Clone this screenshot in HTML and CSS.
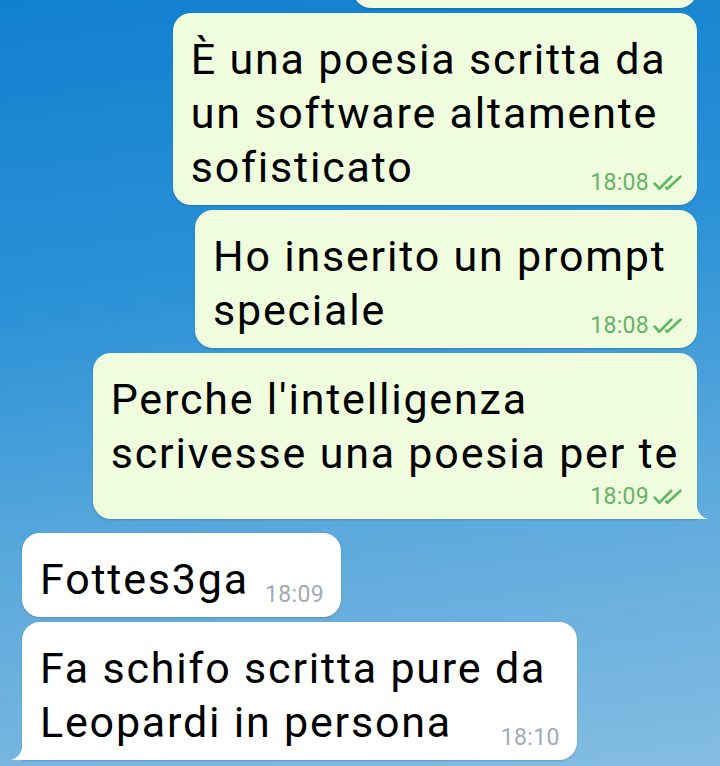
FILE: index.html
```html
<!DOCTYPE html>
<html lang="it">
<head>
    <meta charset="UTF-8">
    <meta name="viewport" content="width=device-width, initial-scale=1.0">
    <title>Chat</title>
    <link rel="stylesheet" href="styles.css">
</head>
<body>
    <div class="chat">
        <div class="bubble out cut"></div>

        <div class="bubble out">
            <span class="text">È una poesia scritta da <br>un software altamente <br>sofisticato</span><span class="spacer"></span>
            <span class="meta">18:08
                <svg class="checks" viewBox="0 0 28 14"><path d="M1.5 7.5 L5.5 12 L16 1.5"/><path d="M11.5 11 L12.5 12 L24 1.5"/></svg>
            </span>
        </div>

        <div class="bubble out">
            <span class="text">Ho inserito un prompt <br>speciale</span><span class="spacer"></span>
            <span class="meta">18:08
                <svg class="checks" viewBox="0 0 28 14"><path d="M1.5 7.5 L5.5 12 L16 1.5"/><path d="M11.5 11 L12.5 12 L24 1.5"/></svg>
            </span>
        </div>

        <div class="bubble out tail">
            <span class="text">Perche l'intelligenza <br>scrivesse una poesia per te</span><br><span class="spacer"></span>
            <span class="meta">18:09
                <svg class="checks" viewBox="0 0 28 14"><path d="M1.5 7.5 L5.5 12 L16 1.5"/><path d="M11.5 11 L12.5 12 L24 1.5"/></svg>
            </span>
            <svg class="tail-shape" viewBox="0 0 12 20"><path d="M0 0 C0 11 4 18 12 20 L0 20 Z"/></svg>
        </div>

        <div class="bubble in first">
            <span class="text">Fottes3ga</span><span class="spacer"></span>
            <span class="meta">18:09</span>
        </div>

        <div class="bubble in tail">
            <span class="text">Fa schifo scritta pure da <br>Leopardi in persona</span><span class="spacer"></span>
            <span class="meta">18:10</span>
            <svg class="tail-shape" viewBox="0 0 12 20"><path d="M12 0 C12 11 8 18 0 20 L12 20 Z"/></svg>
        </div>
    </div>
</body>
</html>
```

FILE: styles.css
```css
body {
    margin: 0;
    padding: 0;
    height: 766px;
    overflow: hidden;
    font-family: Roboto, "Noto Sans", Arial, sans-serif;
    background: linear-gradient(172deg, #1180d0 0%, #2a91d6 35%, #5aa8dc 65%, #84bde2 100%);
}

.chat {
    display: flex;
    flex-direction: column;
    gap: 5px;
    padding: 0 23px 0 22px;
}

.bubble {
    position: relative;
    padding: 19px 18px 11px 18px;
    border-radius: 18px;
    font-size: 22px;
    line-height: 28px;
    white-space: nowrap;
    box-shadow: 0 1px 2px rgba(0, 0, 0, 0.18);
}

.bubble.out {
    align-self: flex-end;
    background-color: #effdde;
}

.bubble.in {
    align-self: flex-start;
    background-color: #fff;
}

.bubble.in.first {
    margin-top: 9px;
}

.bubble.cut {
    width: 344px;
    height: 40px;
    padding: 0;
    margin-top: -32px;
}

.text {
    font-size: 43px;
    line-height: 54px;
    letter-spacing: 1.8px;
    color: #000;
    white-space: pre;
}

.spacer {
    display: inline-block;
    width: 104px;
    height: 0;
}

.bubble.in .spacer {
    width: 74px;
}

.meta {
    position: absolute;
    right: 12px;
    bottom: 10px;
    display: flex;
    align-items: center;
    gap: 4px;
    font-size: 23px;
    line-height: 24px;
    letter-spacing: 0.3px;
    color: #66b268;
}

.bubble.in .meta {
    right: 17px;
    color: #a2abb4;
}

.checks {
    width: 32px;
    height: 16px;
    fill: none;
    stroke: #5db860;
    stroke-width: 2.3;
    stroke-linecap: round;
    stroke-linejoin: round;
}

.bubble.out.tail {
    border-bottom-right-radius: 0;
}

.bubble.in.tail {
    border-bottom-left-radius: 0;
}

.tail-shape {
    position: absolute;
    bottom: 0;
    width: 12px;
    height: 20px;
}

.bubble.out .tail-shape {
    right: -11px;
    fill: #effdde;
}

.bubble.in .tail-shape {
    left: -11px;
    fill: #fff;
}
```
